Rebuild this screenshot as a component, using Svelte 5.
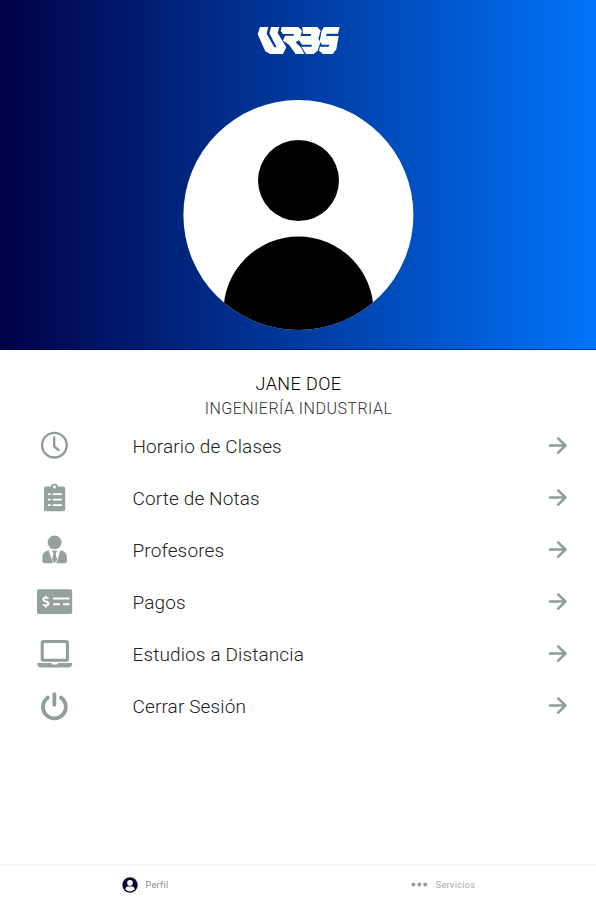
<script>
    // Student profile screen: header with avatar, menu rows and bottom tabs.

    let { name = 'JANE DOE', career = 'INGENIERÍA INDUSTRIAL' } = $props()

    const items = [
        { id: 'clock', label: 'Horario de Clases' },
        { id: 'clipboard', label: 'Corte de Notas' },
        { id: 'teacher', label: 'Profesores' },
        { id: 'check', label: 'Pagos' },
        { id: 'laptop', label: 'Estudios a Distancia' },
        { id: 'power', label: 'Cerrar Sesión' },
    ]

    let tab = $state('perfil')
</script>

<div class="screen">
    <header>
        <svg class="logo" viewBox="0 0 300 132" aria-label="URBE">
            <g fill="#fff">
                <path d="M36 27H61L56 47L79 88H86L64 46L69 27H94L89 45L115 88L105 108H66L52 100L29 49Z" />
                <path d="M101 27H151L162 38L155 65L143 73L160 90L169 108H143L123 80L105 68L111 53H136L138 48H105L98 39Z" />
                <path d="M163 27H208L218 38L211 62L217 73L209 98L197 108H174L160 86H190L192 80H162L153 67L158 54H188L190 48H165Z" />
                <path d="M228 27H275L270 47H236L234 54H272L265 94L254 108H225L213 98L216 86H242L244 80H222L215 70L221 38Z" />
            </g>
        </svg>
        <svg class="avatar" viewBox="0 0 230 230">
            <clipPath id="round"><circle cx="115.4" cy="115" r="115" /></clipPath>
            <g clip-path="url(#round)">
                <rect width="231" height="230" fill="#fff" />
                <circle cx="115.5" cy="80.5" r="40.5" />
                <circle cx="115.5" cy="211.5" r="75" />
            </g>
        </svg>
    </header>

    <main>
        <div class="name">{name}</div>
        <div class="career">{career}</div>

        {#each items as item (item.id)}
            <button class="row">
                <svg class="icon" viewBox="0 0 36 36">
                    {#if item.id === 'clock'}
                        <circle class="line" cx="18.4" cy="18.2" r="12.3" stroke-width="2.4" />
                        <path class="line" d="M18.2 10.5V19.5L22.5 23" stroke-width="2.3" />
                    {:else if item.id === 'clipboard'}
                        <path fill-rule="evenodd" d="M10 7.5H14.8C15.2 3.9 21.8 3.9 22.2 7.5H27.2Q29.2 7.5 29.2 9.5V30.3Q29.2 32.3 27.2 32.3H10Q8 32.3 8 30.3V9.5Q8 7.5 10 7.5ZM18.5 6.4A1.5 1.5 0 1 0 18.5 9.4A1.5 1.5 0 1 0 18.5 6.4Z" />
                        <path class="cut" d="M12 15.2H14.7M12 20.7H14.7M12 26.2H14.7M16.7 15.2H26M16.7 20.7H26M16.7 26.2H26" stroke-width="1.8" />
                    {:else if item.id === 'teacher'}
                        <circle cx="18.6" cy="11.3" r="6.9" />
                        <path d="M12.6 19.3L17 32.3H8.8Q6.3 32.3 6.3 29.8V27Q6.3 20.5 12.6 19.3ZM24.6 19.3L20.2 32.3H28.4Q30.9 32.3 30.9 29.8V27Q30.9 20.5 24.6 19.3ZM16 19.5H21.2L19.7 22.5L21.1 28.8L18.6 32.3L16.1 28.8L17.5 22.5Z" />
                    {:else if item.id === 'check'}
                        <rect x="1" y="6.3" width="35.2" height="24.7" rx="1.8" />
                        <path class="cut" d="M17 15.5H33.5M17 21.3H24M27 21.3H33.5" stroke-width="2" />
                        <path class="cut" d="M12.4 15.8C11.5 14.3 7.3 14.3 7.3 16.6C7.3 19 12.5 18 12.5 20.6C12.5 23 8 22.8 7 21.2M9.9 12.7V15M9.9 22V24.5" stroke-width="2" />
                    {:else if item.id === 'laptop'}
                        <rect class="line" x="6.2" y="6.5" width="25.2" height="18.7" rx="1" stroke-width="3" />
                        <path d="M1.3 28H15.2Q15.5 29.6 17 29.6H20.4Q21.8 29.6 22.1 28H36.1V29.3Q35.8 32.4 32.8 32.4H4.6Q1.6 32.4 1.3 29.3Z" />
                    {:else}
                        <path class="line" d="M11.8 10.6A11.4 11.4 0 1 0 25 10.6" stroke-width="3.8" stroke-linecap="butt" />
                        <path class="line" d="M18.4 7.2V17.8" stroke-width="3.8" />
                    {/if}
                </svg>
                <span class="label">{item.label}</span>
                <svg class="arrow" viewBox="0 0 20 20">
                    <path class="line" d="M2 10.5H17M10.2 3.3L17.4 10.5L10.2 17.7" stroke-width="2.6" />
                </svg>
            </button>
        {/each}
    </main>

    <nav>
        <button class="tab" class:active={tab === 'perfil'} onclick={() => (tab = 'perfil')}>
            <svg class="user" viewBox="0 0 16 16">
                <circle cx="8" cy="8" r="7.7" fill="#080833" />
                <circle cx="8" cy="5.9" r="2.8" fill="#fff" />
                <path d="M3.4 12.6Q3.6 9.6 6 9.6H10Q12.4 9.6 12.6 12.6Q8 16.6 3.4 12.6Z" fill="#fff" />
            </svg>
            <span>Perfil</span>
        </button>
        <button class="tab" class:active={tab === 'servicios'} onclick={() => (tab = 'servicios')}>
            <svg class="dots" viewBox="0 0 17 5">
                <circle cx="2.4" cy="2.5" r="1.9" />
                <circle cx="8.3" cy="2.5" r="1.9" />
                <circle cx="14.2" cy="2.5" r="1.9" />
            </svg>
            <span class="wide">Servicios</span>
        </button>
    </nav>
</div>

<style>
    :global(body) {
        background: #fff;
    }

    .screen {
        height: 900px;
        display: flex;
        flex-direction: column;
        font-family: Roboto, "Liberation Sans", sans-serif;
        color: #222;
    }

    header {
        height: 350px;
        box-sizing: border-box;
        padding-top: 18px;
        display: flex;
        flex-direction: column;
        align-items: center;
        gap: 37.5px;
        background: linear-gradient(90deg, #000046, #0074fa);
        border-bottom: 1px solid rgba(0, 0, 110, 0.5);
    }

    .logo {
        width: 100px;
        height: 44px;
    }

    .avatar {
        width: 230px;
        height: 230px;
        overflow: visible;
    }

    main {
        flex: 1;
        padding-top: 22px;
    }

    .name,
    .career {
        text-align: center;
        font-weight: 300;
        line-height: 24px;
    }

    .name {
        font-size: 18px;
        letter-spacing: 0.4px;
        padding-left: 1px;
        color: #000;
    }

    .career {
        font-size: 16px;
        line-height: 23px;
        letter-spacing: 0.48px;
        padding: 1px 0 0 1px;
        margin-bottom: -1px;
        color: #333;
    }

    button {
        border: none;
        background: none;
        font: inherit;
        color: inherit;
        cursor: pointer;
    }

    .row {
        width: 100%;
        height: 52px;
        padding: 0 28px 0 36px;
        display: flex;
        align-items: center;
        text-align: left;
    }

    .icon {
        width: 36px;
        height: 36px;
        overflow: visible;
        fill: #95a19b;
    }

    .line {
        fill: none;
        stroke: #929d98;
        stroke-linecap: round;
        stroke-linejoin: round;
    }

    .cut {
        fill: none;
        stroke: #fff;
    }

    .label {
        flex: 1;
        padding: 2px 0 0 60.5px;
        font-size: 19px;
        font-weight: 300;
        letter-spacing: 0.13px;
    }

    .arrow {
        width: 20px;
        height: 20px;
    }

    nav {
        height: 34px;
        display: flex;
        border-top: 2px solid #f5f5f5;
    }

    .tab {
        flex: 1;
        padding: 3px 8px 0 0;
        display: flex;
        align-items: center;
        justify-content: center;
        gap: 8px;
        font-size: 9px;
        letter-spacing: 0.3px;
        color: #aaa;
    }

    .tab.active {
        color: #888;
    }

    .wide {
        letter-spacing: 0.35px;
    }

    .user {
        width: 16px;
        height: 16px;
    }

    .dots {
        width: 17px;
        height: 5px;
        fill: #999;
    }
</style>
